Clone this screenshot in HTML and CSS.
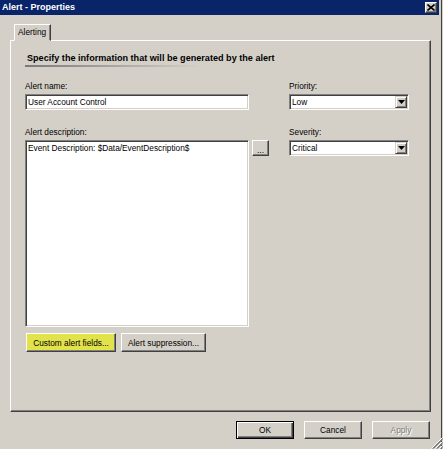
FILE: index.html
```html
<!DOCTYPE html>
<html>
<head>
<meta charset="utf-8">
<title>Alert - Properties</title>
<link rel="stylesheet" href="styles.css">
</head>
<body>
<div class="screen">
  <div class="window">
    <div class="titlebar">
      <span class="title">Alert - Properties</span>
      <span class="close"><svg width="8" height="7" viewBox="0 0 8 7"><path d="M0.5 0.5L7.5 6.5M7.5 0.5L0.5 6.5" stroke="#000" stroke-width="1.6"/></svg></span>
    </div>
    <div class="content">
      <div class="tabs"><div class="tab">Alerting</div></div>
      <div class="panel">
        <div class="heading">Specify the information that will be generated by the alert</div>
        <div class="grid">
          <div class="field">
            <div class="label">Alert name:</div>
            <div class="input">User Account Control</div>
          </div>
          <div class="field">
            <div class="label">Priority:</div>
            <div class="select"><span class="value">Low</span><span class="drop"><svg width="7" height="4" viewBox="0 0 7 4"><path d="M0 0H7L3.5 4Z" fill="#000"/></svg></span></div>
          </div>
          <div class="field">
            <div class="label">Alert description:</div>
            <div class="desc-row">
              <div class="textarea">Event Description: $Data/EventDescription$</div>
              <div class="btn dots">...</div>
            </div>
          </div>
          <div class="field">
            <div class="label">Severity:</div>
            <div class="select"><span class="value">Critical</span><span class="drop"><svg width="7" height="4" viewBox="0 0 7 4"><path d="M0 0H7L3.5 4Z" fill="#000"/></svg></span></div>
          </div>
        </div>
        <div class="actions">
          <div class="btn highlight custom">Custom alert fields...</div>
          <div class="btn suppress">Alert suppression...</div>
        </div>
      </div>
      <div class="footer">
        <div class="btn dialog default">OK</div>
        <div class="btn dialog">Cancel</div>
        <div class="btn dialog disabled">Apply</div>
      </div>
    </div>
  </div>
  <svg class="grip" width="12" height="12" viewBox="0 0 12 12">
    <path d="M11.5 0.5L0.5 11.5M11.5 4.5L4.5 11.5M11.5 8.5L8.5 11.5" stroke="#fff" stroke-width="1"/>
    <path d="M11.5 1.5L1.5 11.5M11.5 2.5L2.5 11.5M11.5 5.5L5.5 11.5M11.5 6.5L6.5 11.5M11.5 9.5L9.5 11.5M11.5 10.5L10.5 11.5" stroke="#808080" stroke-width="1"/>
  </svg>
</div>
</body>
</html>
```

FILE: styles.css
```css
html, body {
  margin: 0;
  padding: 0;
  background: #d4d0c8;
}
body {
  font-family: "Liberation Sans", Arial, sans-serif;
  font-size: 8.3px;
  color: #000;
}
.screen {
  position: relative;
  width: 443px;
  height: 449px;
  overflow: hidden;
}
.window {
  width: 442px;
  height: 449px;
  box-sizing: border-box;
  border-right: 1px solid #404040;
  background: #d4d0c8;
}
.titlebar {
  display: flex;
  align-items: center;
  justify-content: space-between;
  height: 15px;
  margin-right: 2px;
  padding: 0 2px;
  box-sizing: border-box;
  background: #0a246a;
}
.title {
  color: #fff;
  font-weight: bold;
  font-size: 9px;
  line-height: 15px;
}
.close {
  display: flex;
  align-items: center;
  justify-content: center;
  width: 12px;
  height: 11px;
  box-sizing: border-box;
  background: #d4d0c8;
  border: 1px solid;
  border-color: #fff #404040 #404040 #fff;
  box-shadow: inset -1px -1px #808080;
}
.content {
  padding: 9px 10px 0 10px;
}
.tabs {
  display: flex;
  padding-left: 4px;
}
.tab {
  position: relative;
  z-index: 1;
  height: 17px;
  margin-bottom: -1px;
  padding: 0 4px 0 3px;
  box-sizing: border-box;
  line-height: 15px;
  background: #d4d0c8;
  border: 1px solid;
  border-color: #fff #404040 transparent #fff;
  box-shadow: inset -1px 0 #808080;
}
.panel {
  height: 372px;
  box-sizing: border-box;
  padding: 12px 14px 0 14px;
  border: 1px solid;
  border-color: #fff #404040 #404040 #fff;
  box-shadow: inset -1px -1px #808080;
}
.heading {
  font-weight: bold;
  font-size: 9.1px;
  line-height: 11px;
  text-indent: 2px;
}
.heading::after {
  content: "";
  display: block;
  width: 175px;
  height: 2px;
  margin-top: 1px;
  background: linear-gradient(to right, #7a7a7a, rgba(212, 208, 200, 0));
}
.grid {
  display: grid;
  grid-template-columns: 244px 120px;
  column-gap: 20px;
  row-gap: 17px;
  margin-top: 14px;
}
.label {
  line-height: 10px;
  margin-bottom: 3px;
}
.input,
.textarea,
.select {
  box-sizing: border-box;
  background: #fff;
  border: 1px solid;
  border-color: #808080 #fff #fff #808080;
  box-shadow: inset 1px 1px #404040, inset -1px -1px #d4d0c8;
}
.input {
  width: 224px;
  height: 16px;
  padding: 0 2px;
  line-height: 14px;
}
.desc-row {
  display: flex;
  align-items: flex-start;
  gap: 3px;
}
.textarea {
  width: 224px;
  height: 187px;
  padding: 2px 2px;
  line-height: 10px;
}
.select {
  display: flex;
  align-items: center;
  width: 120px;
  height: 16px;
  padding: 1px 1px 1px 2px;
}
.select .value {
  flex: 1;
  line-height: 12px;
}
.drop {
  display: flex;
  align-items: center;
  justify-content: center;
  width: 12px;
  height: 12px;
  box-sizing: border-box;
  background: #d4d0c8;
  border: 1px solid;
  border-color: #d4d0c8 #404040 #404040 #d4d0c8;
  box-shadow: inset 1px 1px #fff, inset -1px -1px #808080;
}
.btn {
  display: flex;
  align-items: center;
  justify-content: center;
  box-sizing: border-box;
  background: #d4d0c8;
  border: 1px solid;
  border-color: #fff #404040 #404040 #fff;
  box-shadow: inset -1px -1px #808080;
  white-space: nowrap;
}
.dots {
  width: 17px;
  height: 16px;
  padding-top: 4px;
}
.actions {
  display: flex;
  gap: 5px;
  margin-top: 6px;
  padding-left: 1px;
}
.actions .btn {
  height: 19px;
}
.custom {
  width: 90px;
}
.suppress {
  width: 85px;
}
.highlight {
  background: #e2e24a;
}
.footer {
  display: flex;
  justify-content: flex-end;
  gap: 10px;
  margin-top: 9px;
  padding-right: 1px;
}
.dialog {
  width: 58px;
  height: 18px;
}
.default {
  border-color: #000;
  box-shadow: inset 1px 1px #fff, inset -1px -1px #404040, inset -2px -2px #808080;
}
.disabled {
  color: #808080;
  text-shadow: 1px 1px #fff;
}
.grip {
  position: absolute;
  right: 0;
  bottom: 0;
}
```
